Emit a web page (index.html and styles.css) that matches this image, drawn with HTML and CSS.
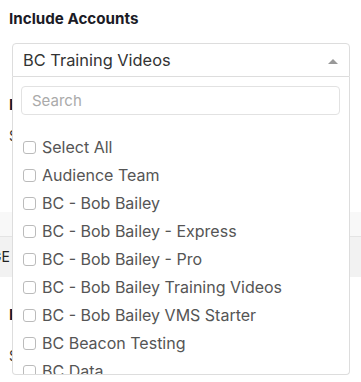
FILE: index.html
```html
<!DOCTYPE html>
<html lang="en">
<head>
    <meta charset="UTF-8">
    <meta name="viewport" content="width=device-width, initial-scale=1.0">
    <title>Include Accounts</title>
    <link rel="stylesheet" href="styles.css">
</head>
<body>

    <div class="page">
        <h2 class="label">Include Accounts</h2>

        <div class="field">
            <div class="select-toggle">
                <span>BC Training Videos</span>
                <span class="arrow"></span>
            </div>

            <div class="dropdown">
                <input class="search" type="text" placeholder="Search">
                <ul class="options">
                    <li><span class="check"></span>Select All</li>
                    <li><span class="check"></span>Audience Team</li>
                    <li><span class="check"></span>BC - Bob Bailey</li>
                    <li><span class="check"></span>BC - Bob Bailey - Express</li>
                    <li><span class="check"></span>BC - Bob Bailey - Pro</li>
                    <li><span class="check"></span>BC - Bob Bailey Training Videos</li>
                    <li><span class="check"></span>BC - Bob Bailey VMS Starter</li>
                    <li><span class="check"></span>BC Beacon Testing</li>
                    <li><span class="check"></span>BC Data</li>
                </ul>
            </div>
        </div>

        <!-- content hidden behind the open dropdown -->
        <h2 class="label behind">Include Properties</h2>
        <p class="hint">Select the properties to report on</p>

        <div class="band">
            <div class="band-top"></div>
            <div class="band-main"><span>GE</span></div>
        </div>

        <h2 class="label behind-2">Include Dates</h2>
        <p class="hint hint-2">Select a date range</p>
    </div>

</body>
</html>
```

FILE: styles.css
```css
html,
body {
    margin: 0;
    padding: 0;
    min-height: 100vh;
}
body {
    background-color: #fff;
    font-family: "Inter", "Liberation Sans", sans-serif;
    color: #333;
}
.page {
    position: relative;
    min-height: 100vh;
    overflow: hidden;
}
.label {
    margin: 0;
    padding: 9px 9px 0;
    font-size: 15.2px;
    font-weight: 700;
    line-height: 20px;
    color: #1b1b26;
}
.field {
    position: relative;
    margin: 14px 11px 0 12px;
    z-index: 5;
}
.select-toggle {
    box-sizing: border-box;
    display: flex;
    justify-content: space-between;
    align-items: center;
    height: 34px;
    padding: 0 11px 0 10px;
    border: 1px solid #ddd;
    border-radius: 4px 4px 0 0;
    font-size: 16.4px;
    color: #333;
    background-color: #fff;
}
.arrow {
    width: 0;
    height: 0;
    border-left: 5px solid transparent;
    border-right: 5px solid transparent;
    border-bottom: 5px solid #999;
    margin-top: 3px;
}
.dropdown {
    box-sizing: border-box;
    position: absolute;
    top: 100%;
    left: 0;
    right: 0;
    height: 298px;
    overflow: hidden;
    background-color: #fff;
    border: 1px solid #ddd;
    border-top: 0;
    border-radius: 0 0 4px 4px;
}
.search {
    display: block;
    box-sizing: border-box;
    width: calc(100% - 17px);
    height: 29px;
    margin: 9px 0 0 8px;
    padding: 0 10px;
    border: 1px solid #e2e2e2;
    border-radius: 4px;
    font-family: inherit;
    font-size: 15px;
    color: #333;
    outline: none;
}
.search::placeholder {
    color: #aaa;
}
.options {
    list-style: none;
    margin: 0;
    padding: 18px 0 0 10px;
}
.options li {
    display: flex;
    align-items: center;
    height: 28px;
    font-size: 16px;
    color: #555;
}
.check {
    box-sizing: border-box;
    width: 13px;
    height: 13px;
    margin-right: 6px;
    border: 1px solid #bbb;
    border-radius: 3px;
}
.behind {
    padding-top: 0;
    margin-top: 18px;
}
.hint {
    margin: 12px 9px 0;
    font-size: 14px;
    line-height: 17px;
    color: #333;
}
.band {
    margin-top: 68px;
}
.band-top {
    height: 24px;
    background-color: #f8f8f8;
    border-bottom: 1px solid #e4e4e4;
}
.band-main {
    height: 40px;
    line-height: 40px;
    font-size: 14px;
    color: #222;
    background-color: #f2f2f2;
}
.band-main span {
    margin-left: -9px;
}
.behind-2 {
    padding-top: 0;
    margin-top: 28px;
}
.hint-2 {
    margin-top: 22px;
}
```
